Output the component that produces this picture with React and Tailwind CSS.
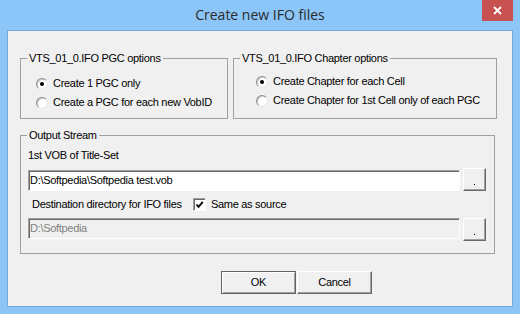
import React from 'react';

const font = { fontFamily: '"Liberation Sans", Arial, sans-serif' };

const Radio = ({ checked, label }) => (
    <div className="flex h-[19px] items-center">
        <span className="flex h-[12px] w-[12px] items-center justify-center rounded-full border border-t-[#8e8e8e] border-l-[#8e8e8e] border-b-[#e6e6e6] border-r-[#e6e6e6] bg-white shadow-[inset_1px_1px_0_#c9c9c9]">
            {checked && <span className="h-[4px] w-[4px] rounded-full bg-black" />}
        </span>
        <span className="ml-[5px]">{label}</span>
    </div>
);

const Group = ({ title, className, children }) => (
    <fieldset className={`m-0 border border-[#a0a0a0] p-0 ${className}`}>
        <legend className="ml-[6px] px-[2px] leading-[13px]">{title}</legend>
        {children}
    </fieldset>
);

const BrowseButton = () => (
    <button className="flex h-[23px] w-[23px] items-end justify-center border border-t-white border-l-white border-r-[#696969] border-b-[#696969] bg-[#f0f0f0] pb-[5px] shadow-[inset_-1px_-1px_0_#a0a0a0]">
        <span className="block h-[1px] w-[1px] bg-black" />
    </button>
);

const PathField = ({ value, disabled }) => (
    <div
        className={`flex h-[21px] w-[432px] items-center border border-t-[#a0a0a0] border-l-[#a0a0a0] border-b-white border-r-white pl-[1px] shadow-[inset_1px_1px_0_#696969] ${disabled ? 'bg-[#f0f0f0] text-[#808080]' : 'bg-white text-black'}`}
    >
        {value}
    </div>
);

const PushButton = ({ label, isDefault }) => (
    <button
        className={`flex h-[23px] w-[75px] items-center justify-center bg-[#f0f0f0] ${isDefault
            ? 'border border-[#646464] shadow-[inset_1px_1px_0_#ffffff,inset_-1px_-1px_0_#a0a0a0]'
            : 'border border-t-white border-l-white border-r-[#696969] border-b-[#696969] shadow-[inset_-1px_-1px_0_#a0a0a0]'}`}
    >
        {label}
    </button>
);

export default function App() {
    return (
        <div className="flex h-[314px] w-[520px] flex-col bg-[#8cc5f7] px-[7px] pb-[7px] text-[11px] leading-[13px] tracking-[-0.3px] text-black" style={font}>
            {/* title bar */}
            <div className="relative flex h-[30px] items-center justify-center">
                <span className="-mt-[1px] text-[14px] tracking-normal text-[#2b2b2b]" style={{ fontFamily: '"Open Sans", "Noto Sans", sans-serif' }}>
                    Create new IFO files
                </span>
                <div className="absolute right-0 top-0 flex h-[21px] w-[31px] items-center justify-center bg-[#c75050]">
                    <svg width="9" height="9" viewBox="0 0 9 9">
                        <path d="M1 1 L8 8 M8 1 L1 8" stroke="#fff" strokeWidth="1.8" />
                    </svg>
                </div>
            </div>

            {/* client area */}
            <div className="flex flex-1 flex-col border border-[#74abdd] bg-[#f0f0f0] pl-[12px]">
                <div className="mt-[21px] flex gap-[5px]">
                    <Group title="VTS_01_0.IFO PGC options" className="h-[67px] w-[208px]">
                        <div className="pl-[15px] pt-[9px]">
                            <Radio checked label="Create 1 PGC only" />
                            <Radio label="Create a PGC for each new VobID" />
                        </div>
                    </Group>
                    <Group title="VTS_01_0.IFO Chapter options" className="h-[67px] w-[264px]">
                        <div className="pl-[22px] pt-[7px]">
                            <Radio checked label="Create Chapter for each Cell" />
                            <Radio label="Create Chapter for 1st Cell only of each PGC" />
                        </div>
                    </Group>
                </div>

                <Group title="Output Stream" className="mt-[10px] w-[475px]">
                    <div className="flex flex-col pb-[12px] pl-[7px]">
                        <div className="mt-[7px] h-[13px]">1st VOB of Title-Set</div>
                        <div className="mt-[6px] flex items-end gap-[3px]">
                            <PathField value="D:\Softpedia\Softpedia test.vob" />
                            <BrowseButton />
                        </div>
                        <div className="mt-[7px] flex h-[13px] items-center pl-[4px]">
                            <span className="w-[161px] shrink-0">Destination directory for IFO files</span>
                            <span className="flex h-[13px] w-[13px] items-center justify-center border border-t-[#a0a0a0] border-l-[#a0a0a0] border-b-white border-r-white bg-white shadow-[inset_1px_1px_0_#696969]">
                                <svg width="9" height="9" viewBox="0 0 9 9">
                                    <path d="M1.5 4.5 L3.5 6.8 L7.8 1.8" fill="none" stroke="#000" strokeWidth="1.9" />
                                </svg>
                            </span>
                            <span className="ml-[5px]">Same as source</span>
                        </div>
                        <div className="mt-[7px] flex items-start gap-[3px]">
                            <PathField disabled value="D:\Softpedia" />
                            <BrowseButton />
                        </div>
                    </div>
                </Group>

                <div className="mt-[17px] flex gap-[1px] pl-[201px]">
                    <PushButton isDefault label="OK" />
                    <PushButton label="Cancel" />
                </div>
            </div>
        </div>
    );
}
